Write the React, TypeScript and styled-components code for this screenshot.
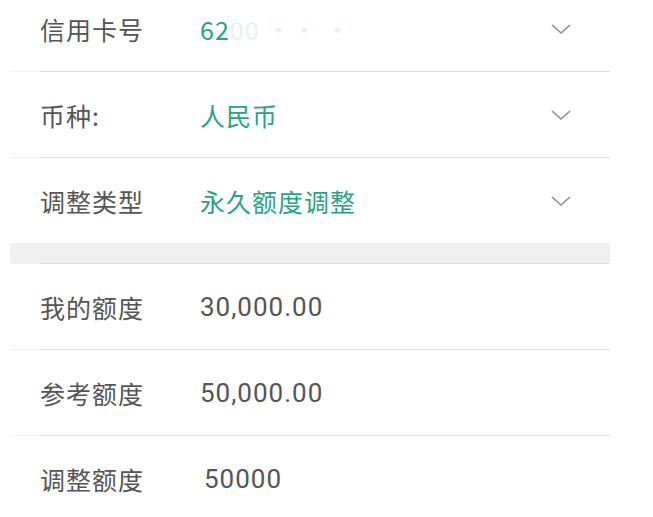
import styled, { createGlobalStyle } from 'styled-components';

const GlobalStyle = createGlobalStyle`
  html, body {
    margin: 0;
    padding: 0;
    background: #ffffff;
  }
  body {
    font-family: "Noto Sans CJK SC", "Noto Sans", sans-serif;
    overflow: hidden;
  }
`

const Page = styled.div`
  width: 600px;
  margin-left: 10px;
  margin-top: -14px;
  background: #ffffff;
`

const Row = styled.div`
  height: 85px;
  display: flex;
  align-items: center;
  padding: 0 38px 0 30px;
`

const Label = styled.div`
  width: 160px;
  font-size: 25px;
  color: #555555;
  letter-spacing: 1px;
`

const Value = styled.div<{ $green?: boolean; $shift?: number }>`
  flex: 1;
  font-size: ${p => (p.$green ? '25px' : '26px')};
  font-family: ${p => (p.$green ? '"Noto Sans CJK SC", sans-serif' : 'Roboto, "Noto Sans CJK SC", sans-serif')};
  color: ${p => (p.$green ? '#2ba286' : '#555555')};
  padding-left: ${p => p.$shift ?? 0}px;
  letter-spacing: 1px;
`

const Faint = styled.span`
  color: #e6f2ef;
`

const Divider = styled.div`
  height: 1px;
  background: linear-gradient(to right, #f2f2f4 30px, #dedee2 30px);
`

const Band = styled.div`
  height: 20px;
  background: #f0f0f2;
`

const Chevron = () => (
  <svg width="22" height="14" viewBox="0 0 22 14">
    <path d="M2 3 L11 11 L20 3" fill="none" stroke="#8e8e8e" strokeWidth="1.6" />
  </svg>
)

interface SelectRowProps {
  label: string;
  children: React.ReactNode;
}

const SelectRow = ({ label, children }: SelectRowProps) => (
  <Row>
    <Label>{label}</Label>
    <Value $green>{children}</Value>
    <Chevron />
  </Row>
)

const App = () => {
  return (
    <>
      <GlobalStyle />
      <Page>
        <SelectRow label="信用卡号">
          62<Faint>00 ·· ·</Faint>
        </SelectRow>
        <Divider />
        <SelectRow label="币种:">人民币</SelectRow>
        <Divider />
        <SelectRow label="调整类型">永久额度调整</SelectRow>
        <Band />
        <Divider />
        <Row>
          <Label>我的额度</Label>
          <Value>30,000.00</Value>
        </Row>
        <Divider />
        <Row>
          <Label>参考额度</Label>
          <Value>50,000.00</Value>
        </Row>
        <Divider />
        <Row>
          <Label>调整额度</Label>
          <Value $shift={4}>50000</Value>
        </Row>
      </Page>
    </>
  );
}

export default App;
